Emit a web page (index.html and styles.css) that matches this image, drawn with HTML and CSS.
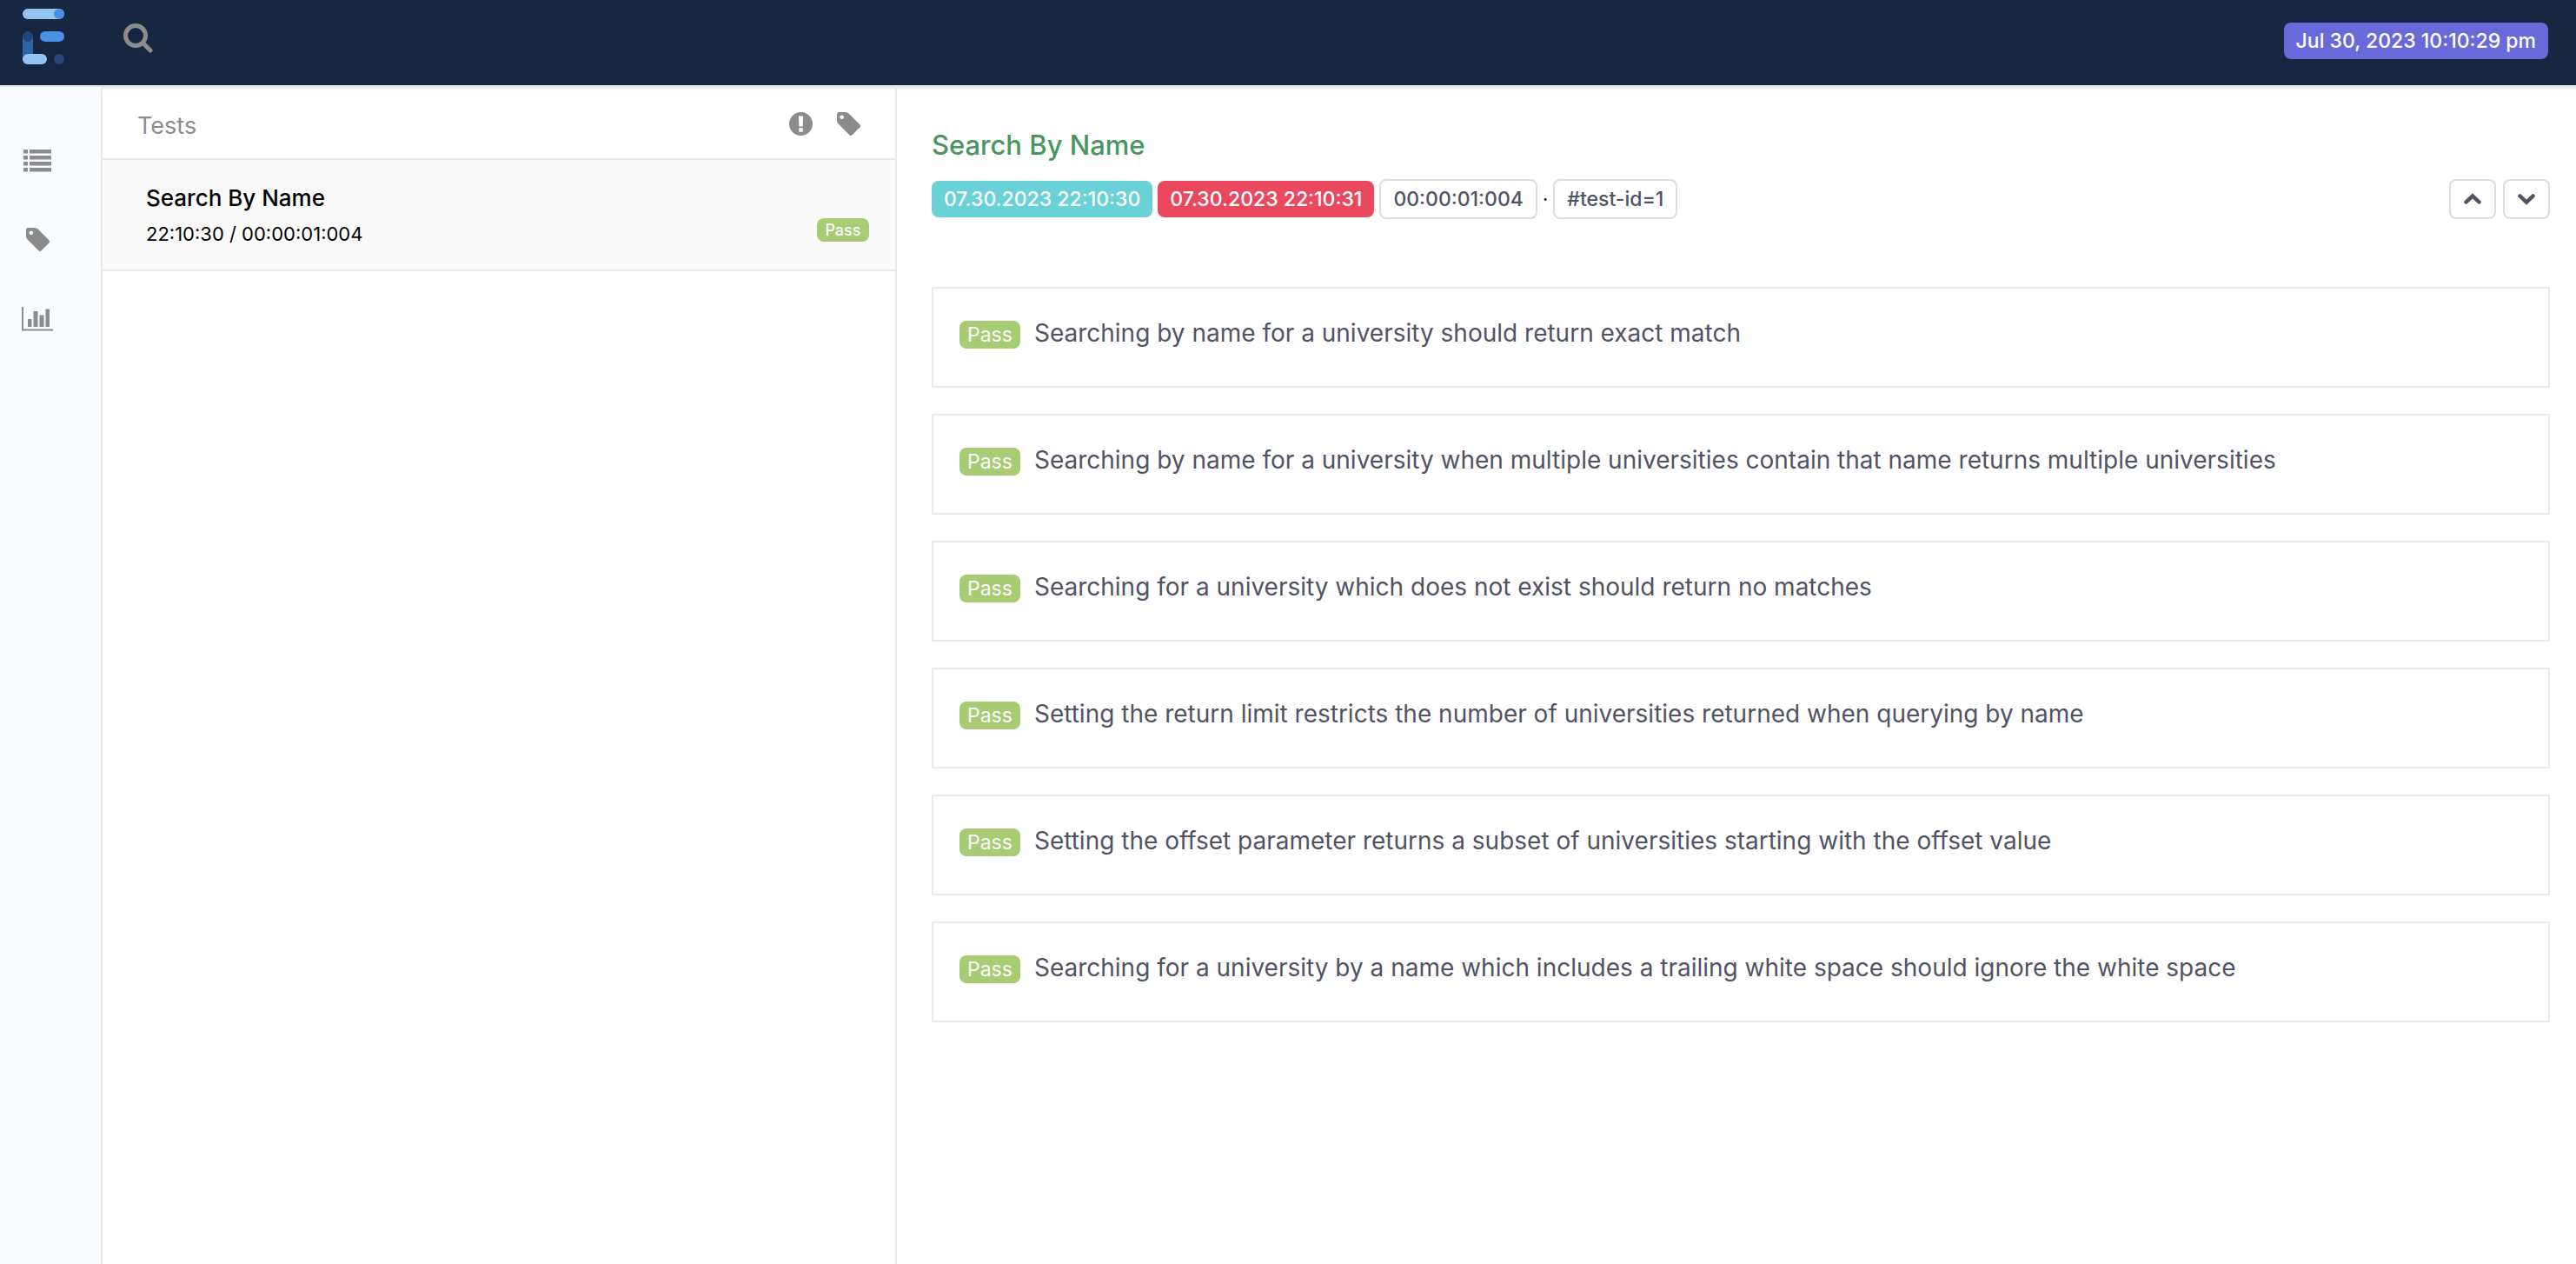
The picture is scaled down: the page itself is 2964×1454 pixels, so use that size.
FILE: index.html
```html
<!DOCTYPE html>
<html lang="en">
<head>
<meta charset="utf-8">
<title>Test Report</title>
<meta name="viewport" content="width=device-width, initial-scale=1">
<link rel="stylesheet" href="styles.css">
</head>
<body>
<svg class="defs" aria-hidden="true">
  <symbol id="tag" viewBox="128 128 1515 1515"><path d="M576 448q0-53-37.500-90.500t-90.500-37.500-90.500 37.500-37.500 90.500 37.500 90.500 90.500 37.500 90.500-37.500 37.500-90.500zm1067 576q0 53-37 90l-491 492q-39 37-91 37-53 0-90-37l-715-716q-38-37-64.500-101t-26.500-117v-416q0-52 38-90t90-38h416q53 0 117 26.500t102 64.500l715 714q37 39 37 91z"/></symbol>
</svg>
<header class="topbar">
  <a class="logo" href="#" aria-label="Home">
    <svg width="48" height="64" viewBox="0 0 48 64">
      <rect width="48" height="12" rx="6" fill="#93c3f3"/><circle cx="42" cy="6" r="6" fill="#4a90e6"/>
      <rect x="20" y="26" width="28" height="12" rx="6" fill="#4a90e6"/>
      <path d="M0 32h12v28H0z" fill="#2d62a3"/><circle cx="6" cy="32" r="6" fill="#24477a"/>
      <rect y="52" width="28" height="12" rx="6" fill="#93c3f3"/><circle cx="42" cy="58" r="6" fill="#24477a"/>
    </svg>
  </a>
  <button class="icon-btn search" type="button" aria-label="Search">
    <svg width="34" height="34" viewBox="0 0 34 34" fill="none" stroke="currentColor" stroke-width="5" stroke-linecap="round"><circle cx="14" cy="14" r="11.500"/><path d="M23 23l8 8"/></svg>
  </button>
  <span class="badge date">Jul 30, 2023 10:10:29 pm</span>
</header>
<div class="layout">
  <nav class="sidebar" aria-label="Views">
    <a href="#" aria-label="Tests"><svg width="32" height="26" viewBox="0 0 32 26"><path d="M0 0h5v4.500H0zM7 0h25v4.500H7zM0 7h5v4.500H0zM7 7h25v4.500H7zM0 14h5v4.500H0zM7 14h25v4.500H7zM0 21h5v4.500H0zM7 21h25v4.500H7z"/></svg></a>
    <a href="#" aria-label="Tags"><svg width="27" height="27"><use href="#tag"/></svg></a>
    <a href="#" aria-label="Dashboard"><svg width="38" height="28" viewBox="0 0 38 28"><path d="M1 0h2v25.500h34v2H1zM8 14h4.500v9H8zM14.500 5h5v18h-5zM21.500 9.500h5V23h-5zM28.500 2.500H33V23h-4.500z"/></svg></a>
  </nav>
  <section class="tests">
    <div class="tests-head">
      <h2>Tests</h2>
      <button class="icon-btn" type="button" aria-label="Status"><svg width="27" height="27" viewBox="0 0 27 27"><path fill-rule="evenodd" d="M13.500 0a13.500 13.500 0 1 1 0 27a13.500 13.500 0 1 1 0-27zM11 4.500l.4 12h4.300l.4-12zM11.300 18.200v4.600h4.500v-4.600z"/></svg></button>
      <button class="icon-btn" type="button" aria-label="Filter by tag"><svg width="27" height="27"><use href="#tag"/></svg></button>
    </div>
    <ul class="test-list">
      <li class="test-item">
        <div>
          <p class="test-name">Search By Name</p>
          <p class="test-time">22:10:30 / 00:00:01:004</p>
        </div>
        <span class="pass small">Pass</span>
      </li>
    </ul>
  </section>
  <main class="detail">
    <h1>Search By Name</h1>
    <div class="meta">
      <span class="badge start">07.30.2023 22:10:30</span>
      <span class="badge end">07.30.2023 22:10:31</span>
      <span class="badge outline">00:00:01:004</span>
      <span class="dot">·</span>
      <span class="badge outline">#test-id=1</span>
      <div class="arrows">
        <button type="button" aria-label="Previous"><svg width="20" height="14" viewBox="0 0 20 14"><path d="M2.500 10.500L10 3.300L17.500 10.500"/></svg></button>
        <button type="button" aria-label="Next"><svg width="20" height="14" viewBox="0 0 20 14"><path d="M2.500 3.500L10 10.700L17.500 3.500"/></svg></button>
      </div>
    </div>
    <ul class="cards">
      <li><span class="pass">Pass</span><span>Searching by name for a university should return exact match</span></li>
      <li><span class="pass">Pass</span><span>Searching by name for a university when multiple universities contain that name returns multiple universities</span></li>
      <li><span class="pass">Pass</span><span>Searching for a university which does not exist should return no matches</span></li>
      <li><span class="pass">Pass</span><span>Setting the return limit restricts the number of universities returned when querying by name</span></li>
      <li><span class="pass">Pass</span><span>Setting the offset parameter returns a subset of universities starting with the offset value</span></li>
      <li><span class="pass">Pass</span><span>Searching for a university by a name which includes a trailing white space should ignore the white space</span></li>
    </ul>
  </main>
</div>
</body>
</html>
```
FILE: styles.css
```css
* { box-sizing: border-box; }
body {
  margin: 0;
  min-height: 100vh;
  display: flex;
  flex-direction: column;
  background: #fff;
  color: #000;
  font-family: Inter, "Liberation Sans", sans-serif;
  font-size: 22px;
}
h1, h2, p, ul { margin: 0; padding: 0; }
ul { list-style: none; }
svg { display: block; fill: currentColor; }
button { padding: 0; background: none; cursor: pointer; }
.defs { position: absolute; width: 0; height: 0; }

.topbar {
  display: flex;
  align-items: flex-start;
  height: 100px;
  padding: 10px 32px 0 26px;
  background: #182741;
  border-bottom: 2px solid #e8eaea;
}
.icon-btn { border: 0; color: #8c8c8c; }
.search { margin: 17px 0 0 68px; }
.search svg { fill: none; }

.badge {
  display: flex;
  align-items: center;
  height: 42px;
  padding: 0 14px;
  border-radius: 8px;
  color: #fff;
  font-size: 23px;
  font-weight: 500;
  white-space: nowrap;
}
.date { margin: 16px 0 0 auto; background: #686ad9; }
.start { background: #68d2d6; }
.end { background: #ea485f; }
.outline { height: 46px; border: 2px solid #dcdce2; color: #515365; }

.layout {
  flex: 1;
  display: grid;
  grid-template-columns: 118px 1fr 2.114fr;
}
.sidebar {
  display: flex;
  flex-direction: column;
  align-items: center;
  gap: 64px;
  padding: 72px 30px 0 0;
  background: #f8fbff;
  border-right: 2px solid #e8eaea;
}
.sidebar a { color: #8c8c8c; }

.tests { border-top: 2px solid #e9e9e9; border-right: 2px solid #e9e9e9; }
.tests-head {
  display: flex;
  align-items: center;
  gap: 28px;
  height: 82px;
  padding: 0 40px;
  border-bottom: 2px solid #e9e9e9;
}
.tests-head h2 { margin-right: auto; padding-top: 4px; color: #8c8c8c; font-size: 27px; font-weight: 400; }
.test-item {
  display: flex;
  justify-content: space-between;
  align-items: flex-end;
  padding: 24px 30px 20px 50px;
  background: #fafafa;
  border-bottom: 2px solid #e9e9e9;
}
.test-name { font-size: 26px; font-weight: 500; line-height: 40px; }
.test-time { font-size: 22px; line-height: 42px; }

.pass {
  flex: none;
  display: flex;
  align-items: center;
  justify-content: center;
  width: 70px;
  height: 32px;
  border-radius: 8px;
  background: #a7cc74;
  color: #fafafa;
  font-size: 23px;
}
.pass.small { width: 60px; height: 27px; margin-bottom: 12px; font-size: 18px; font-weight: 500; }

.detail { padding: 45px 30px 0 40px; border-top: 2px solid #e9e9e9; }
h1 { color: #48965e; font-size: 31px; font-weight: 500; line-height: 40px; }
.meta { display: flex; align-items: center; gap: 6px; margin-top: 19px; }
.arrows { display: flex; gap: 8px; margin-left: auto; }
.arrows button {
  display: grid;
  place-items: center;
  width: 54px;
  height: 46px;
  border: 2px solid #dcdce2;
  border-radius: 8px;
  color: #515365;
}
.arrows svg { fill: none; stroke: currentColor; stroke-width: 4.5; stroke-linecap: round; }
.cards { display: grid; gap: 30px; margin-top: 78px; }
.cards li {
  display: flex;
  align-items: center;
  gap: 16px;
  padding: 31px 30px 41px;
  border: 2px solid #e9e9e9;
  color: #515365;
  font-size: 28px;
  font-weight: 400;
  line-height: 40px;
}
.cards .pass { margin-top: 4px; }
```
